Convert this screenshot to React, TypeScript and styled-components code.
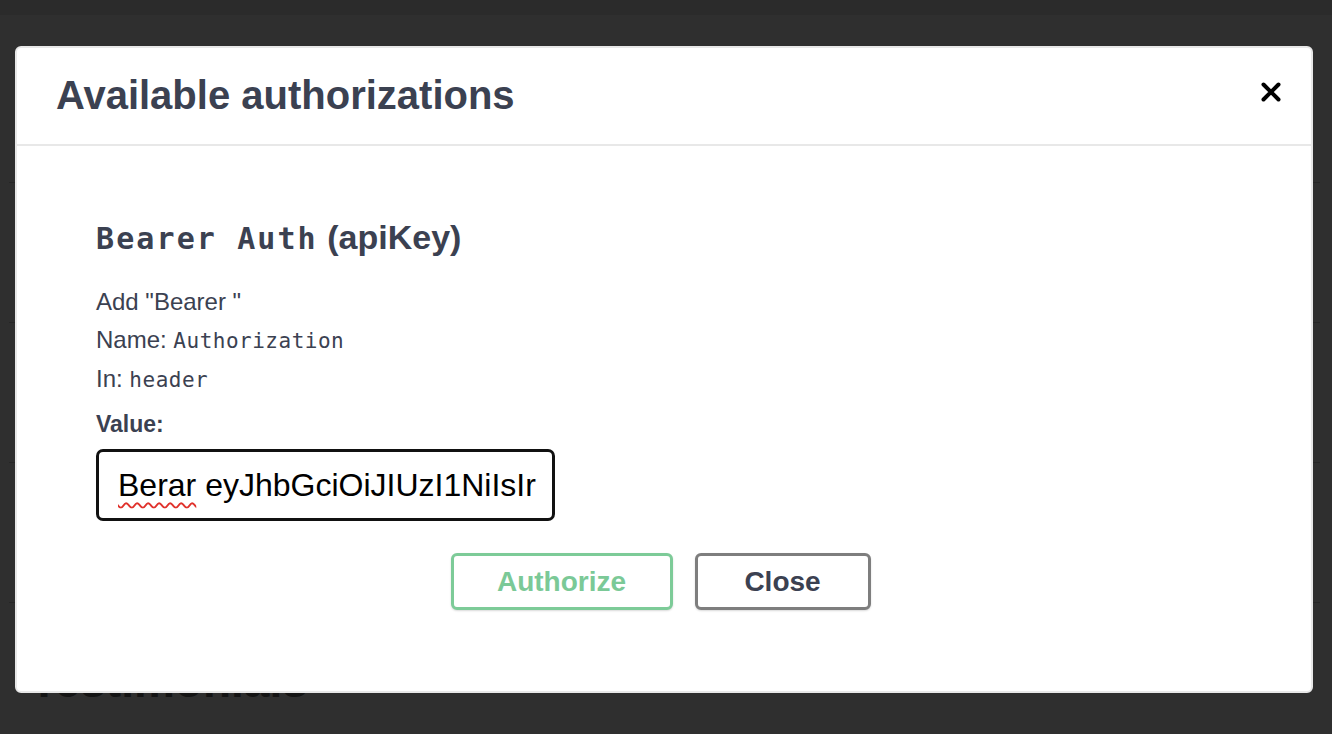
import React from 'react'
import styled, { createGlobalStyle } from 'styled-components'

const GlobalStyle = createGlobalStyle`
  html, body {
    margin: 0;
    padding: 0;
    background: #2f2f2f;
  }
  * { box-sizing: border-box; }
`

const Page = styled.div`
  position: relative;
  width: 1332px;
  height: 734px;
  overflow: hidden;
  background: #2f2f2f;
`

const TopBand = styled.div`
  height: 15px;
  background: #2b2b2b;
`

const BgList = styled.div`
  padding: 0 12px 0 9px;
`

const BgRow = styled.div<{ $h: number }>`
  height: ${(p) => p.$h}px;
  border-bottom: 1px solid #262626;
`

const BgHeading = styled.h2`
  margin: 53px 0 0 30px;
  font-family: "Liberation Sans", Arial, sans-serif;
  font-size: 46px;
  line-height: 50px;
  font-weight: 700;
  color: #141414;
`

const Overlay = styled.div`
  position: absolute;
  inset: 0;
  padding: 46px 19px 41px 15px;
  display: flex;
`

const Modal = styled.div`
  flex: 1;
  display: flex;
  flex-direction: column;
  background: #fff;
  border: 2px solid #e8e8e8;
  border-radius: 6px;
  color: #3b4151;
  font-family: "Liberation Sans", Arial, sans-serif;
`

const Header = styled.div`
  height: 98px;
  display: flex;
  align-items: center;
  justify-content: space-between;
  padding: 0 30px 0 39px;
  border-bottom: 2px solid #e8e8e8;
`

const Title = styled.h3`
  margin: 0 0 2px;
  font-size: 40px;
  font-weight: 700;
  color: #3b4151;
`

const CloseIcon = styled.button`
  width: 20px;
  height: 20px;
  padding: 0;
  border: none;
  background: none;
  display: flex;
  margin-top: -8px;
`

const Content = styled.div`
  padding: 71px 40px 0 79px;
`

const AuthTitle = styled.h4`
  margin: 0 0 24px;
  font-size: 34px;
  line-height: 40px;
  font-weight: 700;
  color: #3b4151;
`

const Code = styled.code<{ $size: number; $spacing: number }>`
  font-family: "DejaVu Sans Mono", monospace;
  font-size: ${(p) => p.$size}px;
  letter-spacing: ${(p) => p.$spacing}px;
`

const Line = styled.p`
  margin: 0;
  font-size: 24px;
  line-height: 38px;
  color: #3b4151;
`

const Label = styled.label`
  display: block;
  margin-top: 10px;
  font-size: 23px;
  line-height: 30px;
  font-weight: 700;
  color: #3b4151;
`

const ValueBox = styled.div`
  margin-top: 10px;
  width: 459px;
  height: 72px;
  border: 3px solid #111;
  border-radius: 7px;
  padding: 0 17px 0 19px;
  display: flex;
  align-items: center;
  overflow: hidden;
  white-space: nowrap;
  font-size: 32px;
  color: #000;
`

const Misspelled = styled.span`
  text-decoration: underline wavy #e0312b;
  text-decoration-thickness: 1.5px;
  text-underline-offset: 6px;
`

const Buttons = styled.div`
  display: flex;
  justify-content: center;
  gap: 22px;
  margin: 32px 0 0 -46px;
`

const Btn = styled.button<{ $tone: 'green' | 'gray' }>`
  height: 57px;
  width: ${(p) => (p.$tone === 'green' ? 222 : 176)}px;
  padding: 0;
  background: #fff;
  border: 3px solid ${(p) => (p.$tone === 'green' ? '#7dcb98' : '#7e7e7e')};
  border-radius: 6px;
  box-shadow: 0 1px 2px rgba(0, 0, 0, 0.15);
  font-family: "Liberation Sans", Arial, sans-serif;
  font-size: 28px;
  font-weight: 700;
  color: ${(p) => (p.$tone === 'green' ? '#7bc997' : '#3b4151')};
`

export default function App() {
  return (
    <Page>
      <GlobalStyle />
      <TopBand />
      <BgList>
        <BgRow $h={168} />
        <BgRow $h={140} />
        <BgRow $h={140} />
        <BgRow $h={140} />
      </BgList>
      <BgHeading>Testimonials</BgHeading>
      <Overlay>
        <Modal>
          <Header>
            <Title>Available authorizations</Title>
            <CloseIcon aria-label="Close">
              <svg width="20" height="20" viewBox="0 0 20 20">
                <path d="M2.5 2.5 L17.5 17.5 M17.5 2.5 L2.5 17.5" stroke="#000" strokeWidth="4" strokeLinecap="round" />
              </svg>
            </CloseIcon>
          </Header>
          <Content>
            <AuthTitle>
              <Code $size={30} $spacing={2.1}>Bearer Auth</Code> (apiKey)
            </AuthTitle>
            <Line>Add "Bearer "</Line>
            <Line>
              Name: <Code $size={21} $spacing={0.5}>Authorization</Code>
            </Line>
            <Line>
              In: <Code $size={21} $spacing={0.5}>header</Code>
            </Line>
            <Label>Value:</Label>
            <ValueBox>
              <Misspelled>Berar</Misspelled>&nbsp;eyJhbGciOiJIUzI1NiIsIr
            </ValueBox>
            <Buttons>
              <Btn $tone="green">Authorize</Btn>
              <Btn $tone="gray">Close</Btn>
            </Buttons>
          </Content>
        </Modal>
      </Overlay>
    </Page>
  )
}
